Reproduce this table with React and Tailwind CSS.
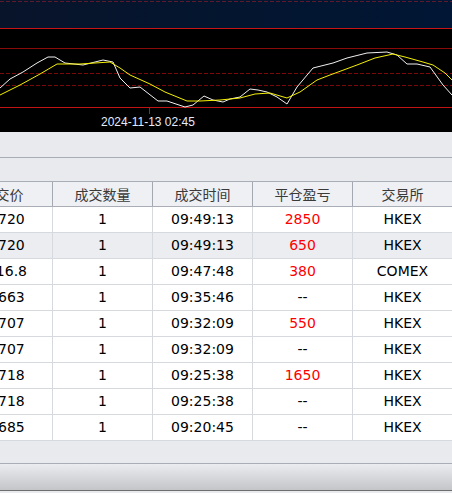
import React from "react";

const cols = ["成交价", "成交数量", "成交时间", "平仓盈亏", "交易所"];

const rows = [
  ["16720", "1", "09:49:13", "2850", "HKEX"],
  ["16720", "1", "09:49:13", "650", "HKEX"],
  ["2716.8", "1", "09:47:48", "380", "COMEX"],
  ["16663", "1", "09:35:46", "--", "HKEX"],
  ["16707", "1", "09:32:09", "550", "HKEX"],
  ["16707", "1", "09:32:09", "--", "HKEX"],
  ["16718", "1", "09:25:38", "1650", "HKEX"],
  ["16718", "1", "09:25:38", "--", "HKEX"],
  ["16685", "1", "09:20:45", "--", "HKEX"],
];

const white =
  "0,88 10,79 23,72 37,63 48,57 55,57 65,63 83,65 103,60 113,62 120,78 130,88 140,87 158,101 167,101 185,107 193,105 204,96 213,100 223,102 230,99 240,97 250,89 258,90 267,92 277,97 287,104 297,87 313,68 333,63 347,58 367,53 387,52 397,55 407,64 417,64 430,67 443,85 452,95";
const yellow =
  "0,95 20,85 40,74 57,64 80,64 95,63 110,62 120,68 130,75 150,84 165,92 187,101 200,101 220,100 240,98 255,94 270,93 287,98 300,92 317,80 330,75 357,65 375,58 393,54 405,57 423,62 433,65 445,73 452,80";

const Chart = () => (
  <div>
    <div className="h-[28px] bg-gradient-to-r from-[#08142a] to-[#001634]">
      <svg width="452" height="28" className="block">
        <line x1="0" y1="1.5" x2="452" y2="1.5" stroke="#5c1a2c" strokeDasharray="4 2" />
      </svg>
    </div>
    <div className="h-px bg-[#c81414]" />
    <div className="relative h-[103px] bg-black">
      <svg width="452" height="103" className="block">
        <line x1="0" y1="19.5" x2="452" y2="19.5" stroke="#8a0a0a" />
        <line x1="0" y1="44.5" x2="452" y2="44.5" stroke="#7a0a0a" strokeDasharray="4 2" />
        <line x1="0" y1="56.5" x2="452" y2="56.5" stroke="#7a0a0a" strokeDasharray="4 2" />
        <line x1="0" y1="78.5" x2="452" y2="78.5" stroke="#c01414" />
        <line x1="149.5" y1="79" x2="149.5" y2="85" stroke="#c01414" />
        <g transform="translate(0,-29)">
          <polyline points={white} fill="none" stroke="#f0f0f0" strokeWidth="1" />
          <polyline points={yellow} fill="none" stroke="#f5f000" strokeWidth="1" />
        </g>
      </svg>
      <div className="absolute left-[101px] top-[85px] text-[12px] leading-[16px] text-[#e4ecff] font-['Liberation_Sans',sans-serif]">
        2024-11-13 02:45
      </div>
    </div>
  </div>
);

const App = () => {
  return (
    <div className="w-[452px] h-[493px] overflow-hidden bg-[#e8eaee] font-['DejaVu_Sans','Noto_Sans_CJK_SC',sans-serif]">
      <Chart />
      <div className="h-[26px] border-b border-[#a9adb5]" />
      <div className="h-[23px]" />
      <div className="border-t border-b border-[#a9adb5] bg-[#eef0f3] flex ml-[-47px] h-[26px]">
        {cols.map((c) => (
          <div
            key={c}
            className="w-[100px] shrink-0 border-r border-[#a4a8b0] flex items-center justify-center text-[14px] text-[#3a3a3a] font-['Noto_Sans_CJK_SC',sans-serif]"
          >
            {c}
          </div>
        ))}
      </div>
      <div>
        {rows.map((r, i) => (
          <div
            key={i}
            className={`flex ml-[-47px] h-[26px] border-b border-[#d6d9de] ${
              i === 1 ? "bg-[#ebedf0]" : "bg-white"
            }`}
          >
            {r.map((v, j) => (
              <div
                key={j}
                className={`w-[100px] shrink-0 border-r border-[#d6d9de] flex items-center justify-center text-[14px] ${
                  j === 3 && v !== "--" ? "text-[#ff0000]" : "text-black"
                }`}
              >
                {v}
              </div>
            ))}
          </div>
        ))}
      </div>
      <div className="h-[23px] border-b border-[#a9adb5]" />
      <div className="h-[27px] bg-gradient-to-b from-[#ebecef] to-[#c3c5c9] border-b border-[#6e6e6e]" />
    </div>
  );
};

export default App;
